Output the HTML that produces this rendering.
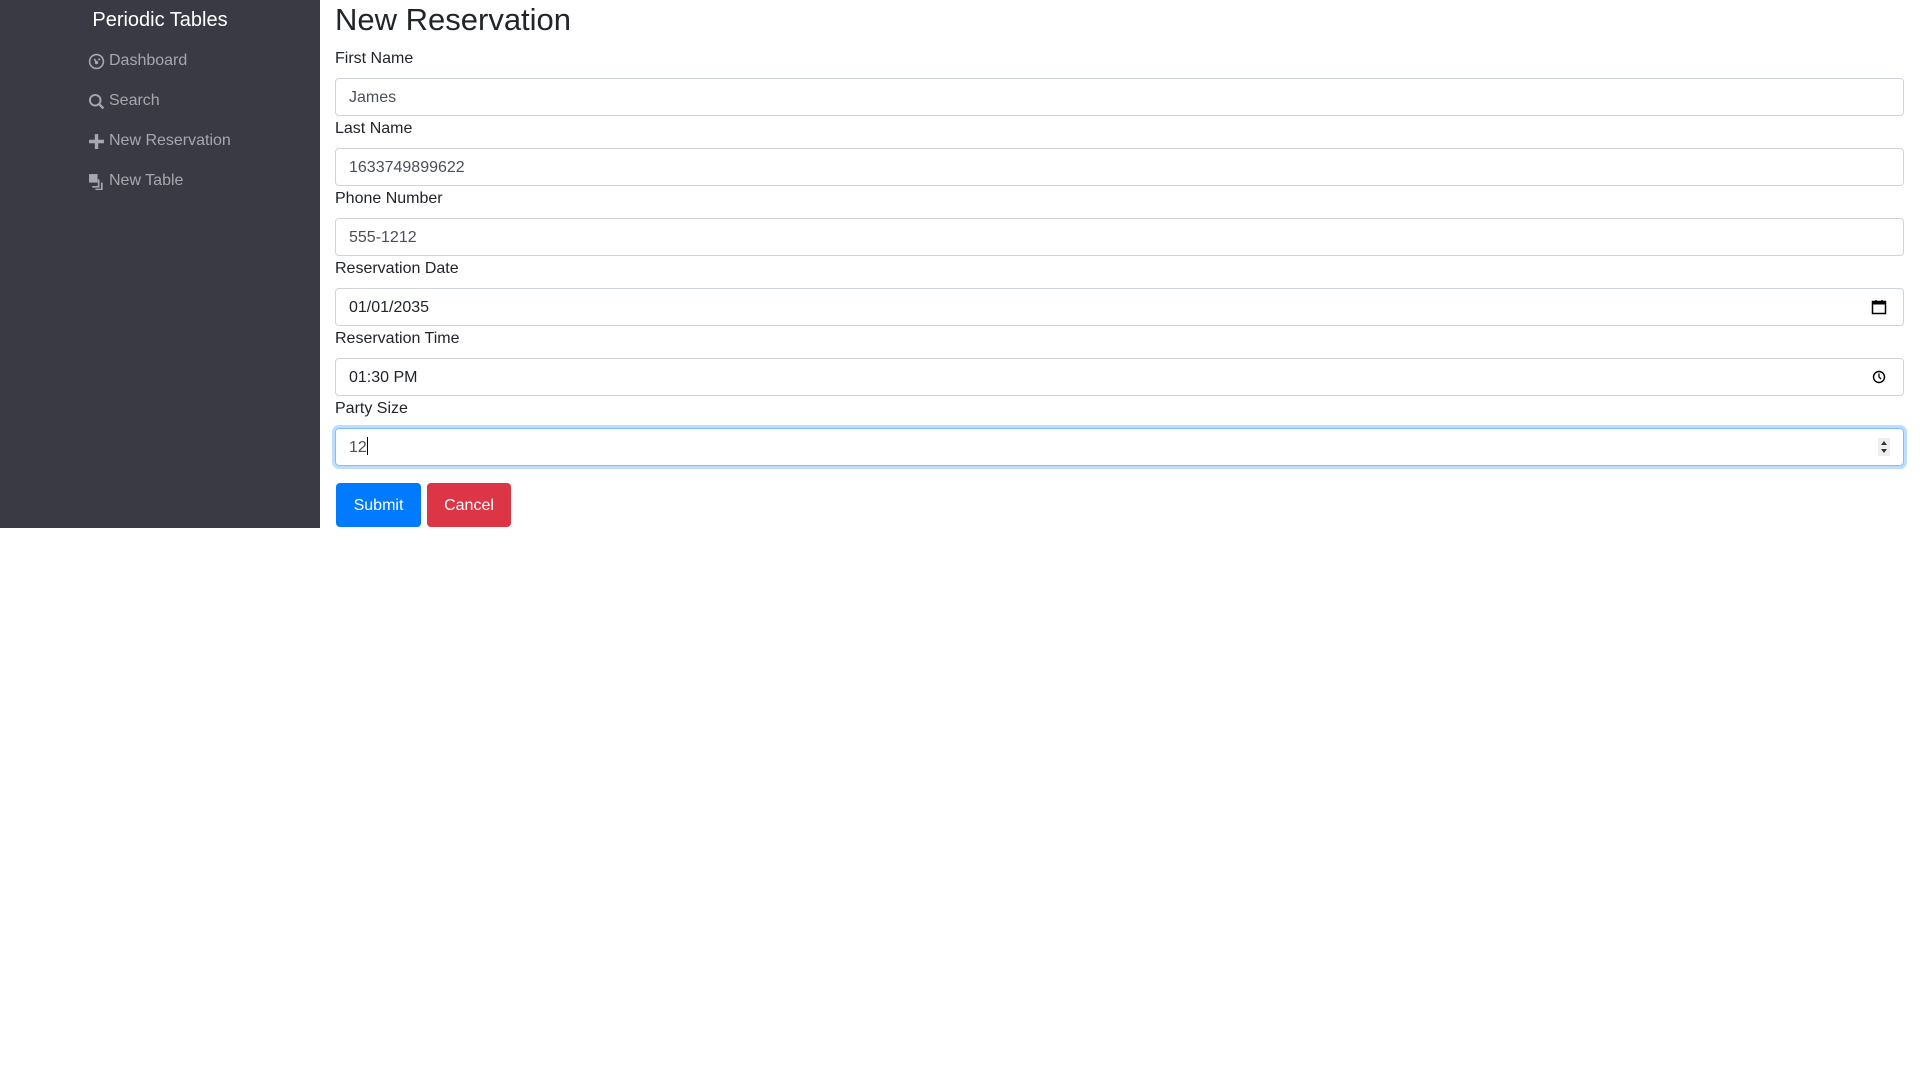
<!DOCTYPE html>
<html><head><meta charset="utf-8"><style>
*{box-sizing:border-box;margin:0;padding:0}
body{width:1920px;height:1080px;background:#fff;font-family:"Liberation Sans",sans-serif;color:#212529;position:relative}
.side{position:absolute;left:0;top:0;width:320px;height:528px;background:#3a3a44}
.title{position:absolute;left:0;width:320px;top:9px;text-align:center;color:#fff;font-size:20px}
.nav{position:absolute;left:88px;color:#a7a7ad;font-size:16px;display:flex;align-items:center;height:20px}
.nav svg{width:17px;height:17px;margin-right:4px}
h2{position:absolute;left:335px;top:1px;font-size:31px;font-weight:500;line-height:38px}
label{position:absolute;left:335px;font-size:16px;line-height:24px;margin-top:1px}
.in{position:absolute;left:335px;width:1569px;height:38px;border:1px solid #ced4da;border-radius:4px;font-size:16px;padding:1px 13px 0;line-height:36px;color:#495057}
.focus{border-color:#80bdff;box-shadow:0 0 0 3px rgba(0,123,255,.25)}
.ic{position:absolute;right:16px;top:10px}
.btn{position:absolute;top:483px;height:44px;color:#fff;font-size:16px;line-height:46px;text-align:center;border-radius:4px}
</style></head><body>
<div class="side">
<div class="title">Periodic Tables</div>
<div class="nav" style="top:51px"><svg viewBox="0 0 16 16"><circle cx="8" cy="8" r="6.5" fill="none" stroke="#a7a7ad" stroke-width="1.5"/><circle cx="8" cy="9" r="1.6" fill="#a7a7ad"/><path d="M8 9L6 5.5" stroke="#a7a7ad" stroke-width="1.5"/><circle cx="10.5" cy="6" r="1" fill="#a7a7ad"/></svg>Dashboard</div>
<div class="nav" style="top:91px"><svg viewBox="0 0 16 16"><circle cx="6.8" cy="6.8" r="5" fill="none" stroke="#a7a7ad" stroke-width="1.8"/><path d="M10.5 10.5L14.5 14.5" stroke="#a7a7ad" stroke-width="2.2"/></svg>Search</div>
<div class="nav" style="top:131px"><svg viewBox="0 0 16 16"><path d="M8 1V15M1 8H15" stroke="#a7a7ad" stroke-width="3.2"/></svg>New Reservation</div>
<div class="nav" style="top:171px"><svg viewBox="0 0 16 16"><rect x="1" y="1" width="8" height="8" fill="#a7a7ad"/><path d="M10 6V13H4" fill="none" stroke="#a7a7ad" stroke-width="1.6"/><path d="M13 9V15.5H7" fill="none" stroke="#a7a7ad" stroke-width="1.6"/></svg>New Table</div>
</div>
<h2>New Reservation</h2>
<label style="top:46px">First Name</label><div class="in" style="top:78px">James</div>
<label style="top:116px">Last Name</label><div class="in" style="top:148px">1633749899622</div>
<label style="top:186px">Phone Number</label><div class="in" style="top:218px">555-1212</div>
<label style="top:256px">Reservation Date</label><div class="in" style="top:288px;color:#212529">01/01/2035<svg class="ic" width="16" height="16" viewBox="0 0 16 16"><rect x="1.5" y="2.5" width="13" height="12" fill="none" stroke="#000" stroke-width="1.5"/><rect x="1.5" y="2.5" width="13" height="3" fill="#000"/><path d="M5 1V3M11 1V3" stroke="#000" stroke-width="1.5"/></svg></div>
<label style="top:326px">Reservation Time</label><div class="in" style="top:358px;color:#212529">01:30 PM<svg class="ic" width="14" height="14" viewBox="0 0 14 14" style="top:11px;right:17px"><circle cx="7" cy="7" r="5.5" fill="none" stroke="#000" stroke-width="1.4"/><path d="M7 3.5V7L9 9" fill="none" stroke="#000" stroke-width="1.3"/></svg></div>
<label style="top:396px">Party Size</label><div class="in focus" style="top:428px">12<span style="display:inline-block;width:1px;height:18px;background:#000;vertical-align:-3px"></span><svg class="ic" width="12" height="18" viewBox="0 0 12 18" style="top:9px;right:13px"><rect width="12" height="18" fill="#eee"/><path d="M3 7L6 3L9 7ZM3 11L6 15L9 11Z" fill="#333"/></svg></div>
<div class="btn" style="left:336px;width:85px;background:#007bff">Submit</div>
<div class="btn" style="left:427px;width:84px;background:#dc3545">Cancel</div>
</body></html>
